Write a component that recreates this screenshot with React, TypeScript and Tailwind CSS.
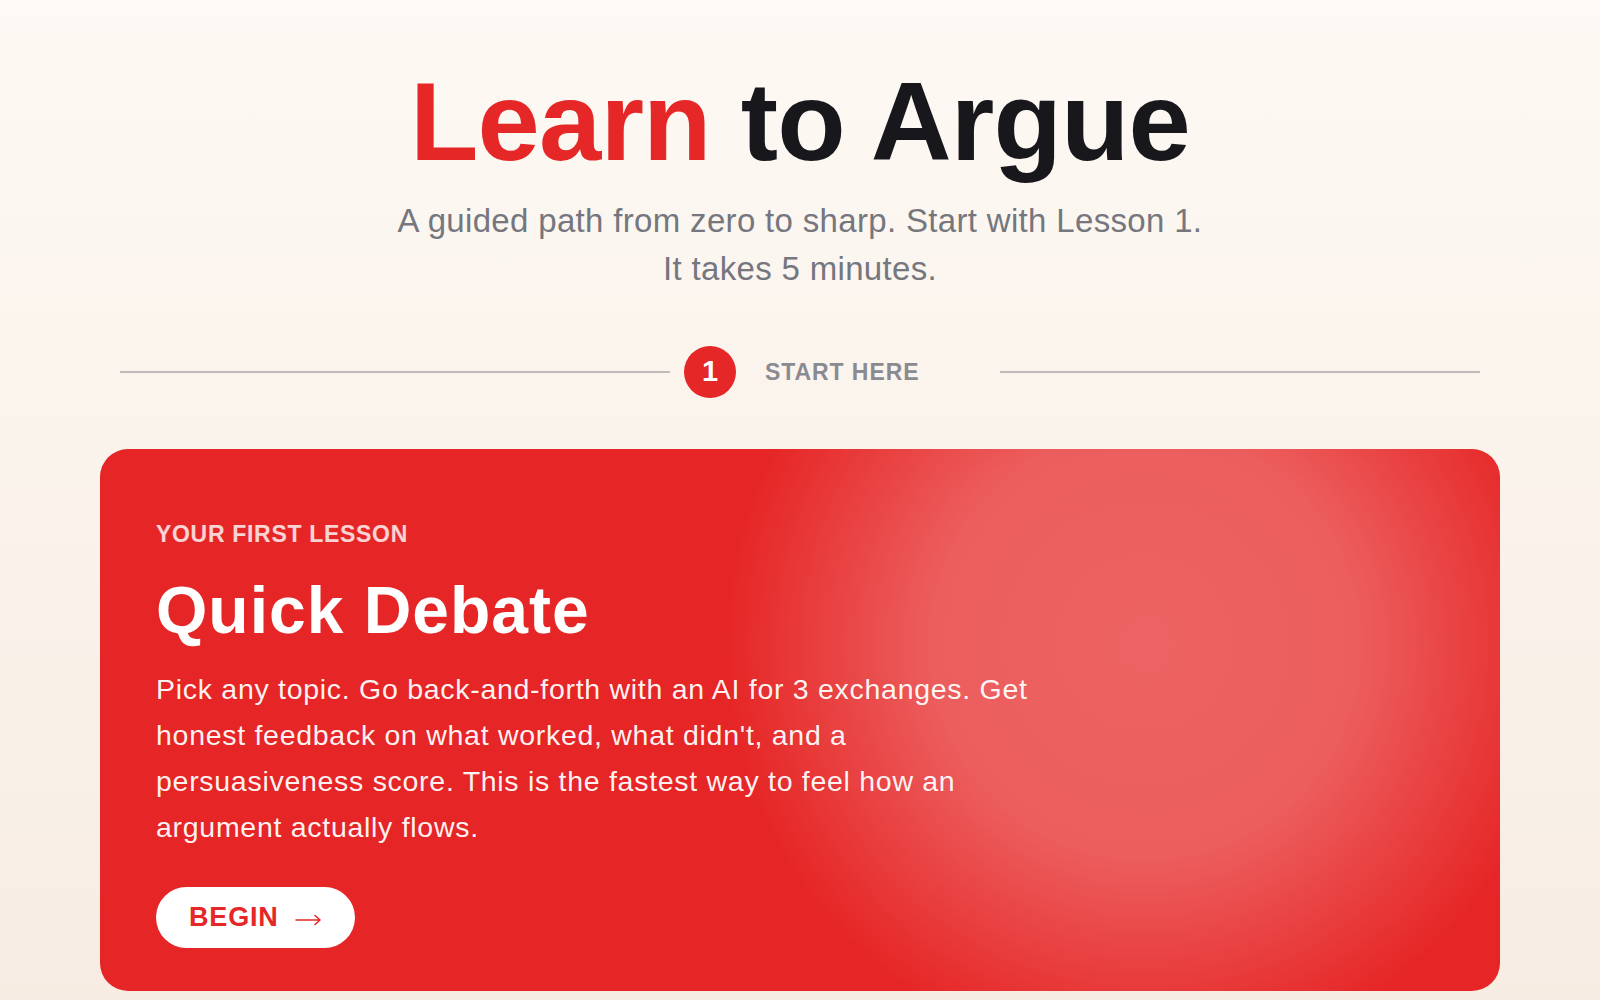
export default function App() {
  return (
    <div
      className="min-h-screen bg-gradient-to-b from-[#fdf9f4] to-[#f7ece2] pb-[40px]"
      style={{ fontFamily: '"Liberation Sans", Arial, sans-serif' }}
    >
      <header className="pt-[66px] text-center">
        <h1 className="text-[112px] font-bold leading-none tracking-[-0.008em] text-[#17171c]">
          <span className="text-[#e52727]">Learn</span> to Argue
        </h1>
        <p className="mx-auto mt-[19px] max-w-[900px] text-[33px] leading-[48px] tracking-[0.01em] text-[#76767e]">
          A guided path from zero to sharp. Start with Lesson 1.
          <br />
          It takes 5 minutes.
        </p>
      </header>

      <div className="mt-[53px] flex items-center px-[120px]">
        <div className="h-[1.5px] w-[550px] bg-[#bebbb8]" />
        <div className="flex w-[330px] items-center gap-[29px] pl-[14px]">
          <span className="flex h-[52px] w-[52px] items-center justify-center rounded-full bg-[#e52727] text-[29px] font-bold text-white">
            1
          </span>
          <span className="text-[23px] font-bold uppercase tracking-[0.04em] text-[#8a8a91]">
            Start here
          </span>
        </div>
        <div className="h-[1.5px] flex-1 bg-[#bebbb8]" />
      </div>

      <section className="mx-[100px] mt-[51px] overflow-hidden rounded-[28px] bg-[#e62626] bg-[radial-gradient(circle_420px_at_1045px_195px,rgba(255,255,255,0.28)_0%,rgba(255,255,255,0.26)_50%,rgba(255,255,255,0)_100%)] px-[56px] pb-[43px] pt-[71px]">
        <p className="text-[23px] font-bold uppercase leading-[28px] tracking-[0.03em] text-white/80">
          Your first lesson
        </p>
        <h2 className="mt-[27px] text-[66px] font-bold leading-[70px] tracking-[0.015em] text-white">
          Quick Debate
        </h2>
        <p className="mt-[21px] max-w-[890px] text-[28.5px] leading-[46px] tracking-[0.025em] text-white/95">
          Pick any topic. Go back-and-forth with an AI for 3 exchanges. Get
          honest feedback on what worked, what didn't, and a persuasiveness
          score. This is the fastest way to feel how an argument actually
          flows.
        </p>
        <button className="mt-[37px] flex h-[61px] w-[199px] items-center rounded-full bg-white pl-[33px] text-[27px] font-bold tracking-[0.03em] text-[#e52727]">
          BEGIN
          <svg
            className="ml-[16px] mt-[5px]"
            width="27"
            height="12"
            viewBox="0 0 27 12"
            fill="none"
            stroke="currentColor"
            strokeWidth="1.6"
            strokeLinecap="round"
            strokeLinejoin="round"
          >
            <path d="M1 6h24M20 1.5 25 6l-5 4.5" />
          </svg>
        </button>
      </section>
    </div>
  );
}
